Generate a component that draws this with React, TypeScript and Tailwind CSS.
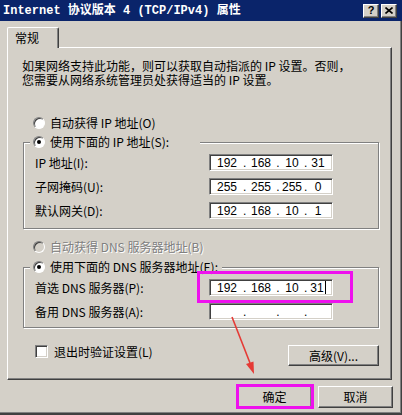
import { Fragment, ReactNode } from 'react';

const ui = "font-['Noto_Sans_CJK_SC',sans-serif]";
const digits = "font-['Liberation_Sans',sans-serif]";

// classic 3d edges
const raised =
  'border border-t-white border-l-white border-r-[#404040] border-b-[#404040] shadow-[inset_-1px_-1px_0_#808080]';
const sunken =
  'border border-t-[#808080] border-l-[#808080] border-r-white border-b-white shadow-[inset_1px_1px_0_#404040,inset_-1px_-1px_0_#d4d0c8]';

const segWidths = ['w-[32px]', 'w-[30px]', 'w-[24px]', 'w-[22px]'];
const dotWidths = ['w-[3px]', 'w-[4px]', 'w-[3px]'];

function IpField({ octets, caret = false }: { octets: string[]; caret?: boolean }) {
  return (
    <div className={`flex h-[17px] w-[124px] items-center bg-white pl-px text-[12px] leading-none ${digits} ${sunken}`}>
      {octets.map((o, i) => (
        <Fragment key={i}>
          <span className={`flex items-center justify-center ${segWidths[i]}`}>
            {o}
            {caret && i === 3 && <span className="ml-px inline-block h-[13px] w-px bg-black" />}
          </span>
          {i < 3 && <span className={`text-center ${dotWidths[i]}`}>.</span>}
        </Fragment>
      ))}
    </div>
  );
}

function Radio({ checked = false, disabled = false }: { checked?: boolean; disabled?: boolean }) {
  return (
    <span
      className={`flex h-[12px] w-[12px] shrink-0 items-center justify-center rounded-full border border-t-[#808080] border-l-[#808080] border-r-white border-b-white shadow-[inset_1px_1px_0_#404040] ${
        disabled ? 'bg-[#d4d0c8]' : 'bg-white'
      }`}
    >
      {checked && <span className="h-[4px] w-[4px] rounded-full bg-black" />}
    </span>
  );
}

function Row({ label, children }: { label: string; children: ReactNode }) {
  return (
    <div className="flex items-center">
      <span className="w-[174px]">{label}</span>
      {children}
    </div>
  );
}

function Button({ children, className = '' }: { children: ReactNode; className?: string }) {
  return (
    <div className={`flex items-center justify-center bg-[#d4d0c8] ${raised} ${className}`}>{children}</div>
  );
}

export default function App() {
  return (
    <div
      className={`relative h-[415px] w-[402px] overflow-hidden bg-[#d4d0c8] text-[12px] leading-[14px] text-black shadow-[inset_-1px_-2px_0_#404040,inset_-2px_-3px_0_#808080] ${ui}`}
    >
      {/* title bar */}
      <div className="flex h-[21px] items-center justify-between bg-[#0a246a] pl-[3px] pr-[5px]">
        <span className="font-['Liberation_Mono','Noto_Sans_CJK_SC',monospace] text-[12px] font-bold leading-none text-white">
          Internet 协议版本 4 (TCP/IPv4) 属性
        </span>
        <div className="flex gap-[2px]">
          <div
            className={`flex h-[14px] w-[16px] items-center justify-center bg-[#d4d0c8] text-[11px] font-bold leading-none ${digits} ${raised}`}
          >
            ?
          </div>
          <div className={`flex h-[14px] w-[16px] items-center justify-center bg-[#d4d0c8] ${raised}`}>
            <svg width="8" height="7" viewBox="0 0 8 7">
              <path d="M0.5 0.5 L7.5 6.5 M7.5 0.5 L0.5 6.5" stroke="#000" strokeWidth="1.6" />
            </svg>
          </div>
        </div>
      </div>

      {/* tabs */}
      <div className="flex pl-[7px] pt-[6px]">
        <div
          className="relative z-10 -mb-px flex h-[21px] w-[52px] items-center rounded-t-[2px] border border-b-0 border-t-white border-l-white border-r-[#404040] bg-[#d4d0c8] pl-[7px] shadow-[inset_-1px_0_0_#808080]"
        >
          常规
        </div>
      </div>

      <div className={`ml-[7px] flex h-[333px] w-[385px] flex-col ${raised}`}>
        <p className="pl-[14px] pt-[11px]">
          如果网络支持此功能，则可以获取自动指派的 IP 设置。否则，
          <br />
          您需要从网络系统管理员处获得适当的 IP 设置。
        </p>

        <div className="ml-[25px] mt-[29px] flex h-[14px] items-center gap-[5px]">
          <Radio />
          <span>自动获得 IP 地址(O)</span>
        </div>

        <fieldset className="ml-[15px] mt-[5px] w-[356px] border border-[#808080] shadow-[1px_1px_0_#fff,inset_1px_1px_0_#fff]">
          <legend className="ml-[6px] flex h-[14px] w-[170px] items-center gap-[5px] bg-[#d4d0c8] pl-[3px]">
            <Radio checked />
            <span>使用下面的 IP 地址(S):</span>
          </legend>
          <div className="flex flex-col gap-[7px] pb-[9px] pl-[11px] pt-[5px]">
            <Row label="IP 地址(I):">
              <IpField octets={['192', '168', '10', '31']} />
            </Row>
            <Row label="子网掩码(U):">
              <IpField octets={['255', '255', '255', '0']} />
            </Row>
            <Row label="默认网关(D):">
              <IpField octets={['192', '168', '10', '1']} />
            </Row>
          </div>
        </fieldset>

        <div className="ml-[25px] mt-[11px] flex h-[14px] items-center gap-[5px] text-[#808080] [text-shadow:1px_1px_0_#fff]">
          <Radio disabled />
          <span>自动获得 DNS 服务器地址(B)</span>
        </div>

        <fieldset className="ml-[15px] mt-[6px] w-[356px] border border-[#808080] shadow-[1px_1px_0_#fff,inset_1px_1px_0_#fff]">
          <legend className="ml-[6px] flex h-[14px] items-center gap-[5px] bg-[#d4d0c8] pl-[3px] pr-[4px]">
            <Radio checked />
            <span>使用下面的 DNS 服务器地址(E):</span>
          </legend>
          <div className="flex flex-col gap-[7px] pb-[7px] pl-[11px] pt-[5px]">
            <Row label="首选 DNS 服务器(P):">
              <IpField octets={['192', '168', '10', '31']} caret />
            </Row>
            <Row label="备用 DNS 服务器(A):">
              <IpField octets={['', '', '', '']} />
            </Row>
          </div>
        </fieldset>

        <div className="ml-[15px] mt-[17px] flex w-[356px] items-start justify-between pl-[12px]">
          <label className="flex h-[13px] items-center gap-[6px]">
            <span className={`h-[13px] w-[13px] bg-white ${sunken}`} />
            <span>退出时验证设置(L)</span>
          </label>
          <Button className="h-[21px] w-[91px]">高级(V)...</Button>
        </div>
      </div>

      <div className="mt-[6px] flex justify-end gap-[6px] pr-[9px]">
        <Button className="h-[22px] w-[75px]">确定</Button>
        <Button className="h-[22px] w-[75px]">取消</Button>
      </div>

      {/* annotation marks */}
      <div className="pointer-events-none absolute left-[197px] top-[271px] h-[32px] w-[156px] border-[3px] border-[#ee11ee]" />
      <div className="pointer-events-none absolute left-[236px] top-[384px] h-[25px] w-[78px] border-[3px] border-[#ee11ee]" />
      <svg className="pointer-events-none absolute left-0 top-0" width="402" height="415">
        <line x1="232" y1="317" x2="250" y2="363" stroke="#e53a35" strokeWidth="1.6" />
        <polygon points="254,374 246,364 253.5,361.5" fill="#e53a35" />
      </svg>
    </div>
  );
}
